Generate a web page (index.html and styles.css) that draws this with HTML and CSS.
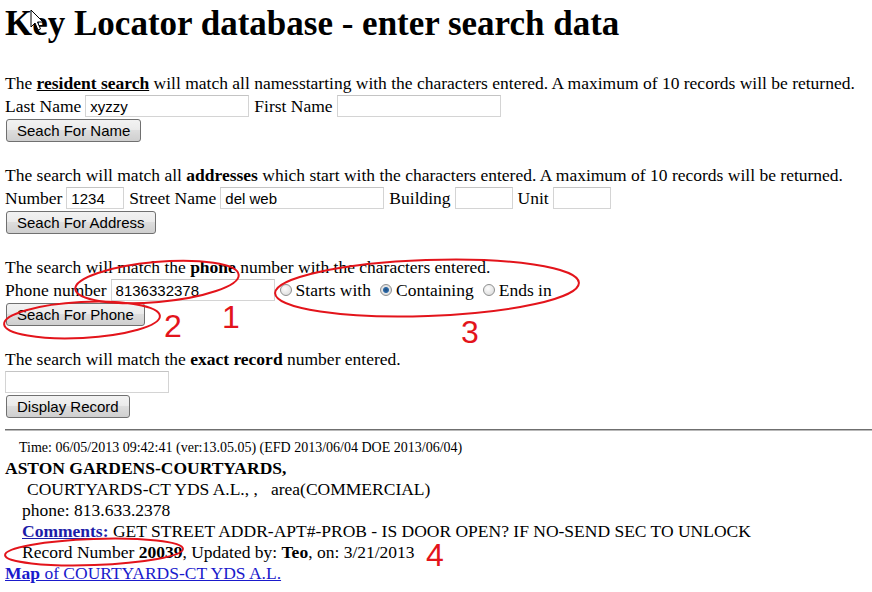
FILE: index.html
```html
<!DOCTYPE html>
<html>
<head>
<meta charset="UTF-8">
<title>Key Locator database</title>
<link rel="stylesheet" href="styles.css">
</head>
<body>

    <h1 class="title">Key Locator database - enter search data</h1>

    <!-- 이름 검색 -->
    <form class="search">
        <div class="note">The <u><b>resident search</b></u> will match all namesstarting with the characters entered. A maximum of 10 records will be returned.</div>
        <div class="row">
            <label>Last Name</label><input type="text" class="field long" value="xyzzy">
            <label>First Name</label><input type="text" class="field long">
        </div>
        <button type="button" class="btn">Seach For Name</button>
    </form>

    <!-- 주소 검색 -->
    <form class="search">
        <div class="note">The search will match all <b>addresses</b> which start with the characters entered. A maximum of 10 records will be returned.</div>
        <div class="row">
            <label>Number</label><input type="text" class="field short" value="1234">
            <label>Street Name</label><input type="text" class="field long" value="del web">
            <label>Building</label><input type="text" class="field short">
            <label>Unit</label><input type="text" class="field short">
        </div>
        <button type="button" class="btn">Seach For Address</button>
    </form>

    <!-- 전화번호 검색 -->
    <form class="search">
        <div class="note">The search will match the <b>phone</b> number with the characters entered.</div>
        <div class="row">
            <label>Phone number</label><input type="text" class="field long" value="8136332378">
            <span class="choice"><input type="radio" name="mode" class="radio"><label>Starts with</label></span>
            <span class="choice"><input type="radio" name="mode" class="radio" checked><label>Containing</label></span>
            <span class="choice"><input type="radio" name="mode" class="radio"><label>Ends in</label></span>
        </div>
        <button type="button" class="btn">Seach For Phone</button>
    </form>

    <!-- 레코드 번호 -->
    <form class="search last">
        <div class="note">The search will match the <b>exact record</b> number entered.</div>
        <div class="row">
            <input type="text" class="field long">
        </div>
        <button type="button" class="btn">Display Record</button>
    </form>

    <hr class="rule">

    <div class="record">
        <div class="time">Time: 06/05/2013 09:42:41 (ver:13.05.05) (EFD 2013/06/04 DOE 2013/06/04)</div>
        <div class="line"><b>ASTON GARDENS-COURTYARDS,</b></div>
        <div class="line indent2">COURTYARDS-CT YDS A.L., , &nbsp; area(COMMERCIAL)</div>
        <div class="line indent">phone: 813.633.2378</div>
        <div class="line indent"><a href="#" class="comments"><b>Comments:</b></a> GET STREET ADDR-APT#-PROB - IS DOOR OPEN? IF NO-SEND SEC TO UNLOCK</div>
        <div class="line indent">Record Number <b>20039</b>, Updated by: <b>Teo</b>, on: 3/21/2013</div>
        <div class="line"><a href="#" class="map"><b>Map</b> of COURTYARDS-CT YDS A.L.</a></div>
    </div>

    <svg class="marks" width="872" height="592" viewBox="0 0 872 592">
        <g fill="none" stroke="#e3141b" stroke-width="2">
            <ellipse cx="157" cy="282" rx="82" ry="20" transform="rotate(-5 157 282)"/>
            <ellipse cx="82" cy="320" rx="78" ry="18" transform="rotate(-3 82 320)"/>
            <ellipse cx="427" cy="288" rx="152" ry="28" transform="rotate(-2 427 288)"/>
            <ellipse cx="94" cy="552" rx="89" ry="13" transform="rotate(-2 94 552)"/>
        </g>
        <g class="num">
            <text x="222" y="328">1</text>
            <text x="164" y="337">2</text>
            <text x="461" y="343">3</text>
            <text x="426" y="566">4</text>
        </g>
        <path d="M31 10 L31 27 L35 23 L38 30 L40.5 29 L37.5 22 L43 22 Z" fill="#fff" stroke="#000" stroke-width="1"/>
    </svg>

</body>
</html>
```
FILE: styles.css
```css
* {
    box-sizing: border-box;
}

body {
    margin: 0;
    padding: 0 5px;
    font-family: "Liberation Serif", "Times New Roman", serif;
    font-size: 17.5px;
    color: #000;
    background-color: #fff;
    position: relative;
    width: 872px;
    height: 592px;
    overflow: hidden;
}

h1.title {
    font-size: 35px;
    line-height: 40px;
    margin: 4px 0 29px;
    white-space: nowrap;
}

.search {
    margin: 0 0 23px;
}

.search.last {
    margin-bottom: 11px;
}

.note {
    line-height: 20px;
    height: 20px;
    white-space: nowrap;
    margin-bottom: 2px;
}

.row {
    display: flex;
    align-items: center;
    height: 22px;
    margin-bottom: 2px;
    white-space: nowrap;
}

.row label {
    margin-right: 4px;
}

.row .field + label {
    margin-left: 5px;
}

.field {
    height: 22px;
    border: 1px solid #d4d4d4;
    border-top-color: #c4c4c4;
    font-family: "Liberation Sans", Arial, sans-serif;
    font-size: 15px;
    padding: 0 4px;
    margin: 0;
    color: #000;
    outline: none;
}

.field.long {
    width: 164px;
}

.field.short {
    width: 58px;
}

.choice {
    display: flex;
    align-items: center;
    margin-left: 5px;
}

.choice + .choice {
    margin-left: 9px;
}

.choice label {
    margin-left: 4px;
    margin-right: 0;
}

.radio {
    appearance: none;
    -webkit-appearance: none;
    width: 12px;
    height: 12px;
    margin: 0;
    border-radius: 50%;
    border: 1px solid #8e8f8f;
    background: radial-gradient(circle at 40% 35%, #fdfdfd, #d6d6d6);
}

.radio:checked {
    background: radial-gradient(circle, #1f4a7a 0, #2c6aa8 2.5px, #e6e6e6 3.5px, #d0d0d0 100%);
}

.btn {
    display: block;
    height: 23px;
    padding: 0 10px;
    margin: 0 0 0 1px;
    font-family: "Liberation Sans", Arial, sans-serif;
    font-size: 15px;
    color: #000;
    border: 1px solid #707070;
    border-radius: 3px;
    background: linear-gradient(#f2f2f2 0, #ebebeb 45%, #dddddd 50%, #cfcfcf 100%);
    cursor: pointer;
}

hr.rule {
    margin: 0 -10px 0 0;
    height: 2px;
    border: none;
    border-top: 1px solid #6f6f6f;
    border-bottom: 1px solid #b9b9b9;
}

.record .time {
    font-size: 14px;
    line-height: 20px;
    height: 27px;
    padding-top: 7px;
    padding-left: 14px;
}

.record .line {
    line-height: 21px;
    height: 21px;
    white-space: nowrap;
}

.record .indent {
    padding-left: 17px;
}

.record .indent2 {
    padding-left: 22px;
}

a.comments {
    color: #1c1ca8;
}

a.map {
    color: #1a1acc;
}

svg.marks {
    position: absolute;
    left: 0;
    top: 0;
    pointer-events: none;
}

.num text {
    font-family: "Liberation Sans", Arial, sans-serif;
    font-size: 32px;
    fill: #e3141b;
}
```
